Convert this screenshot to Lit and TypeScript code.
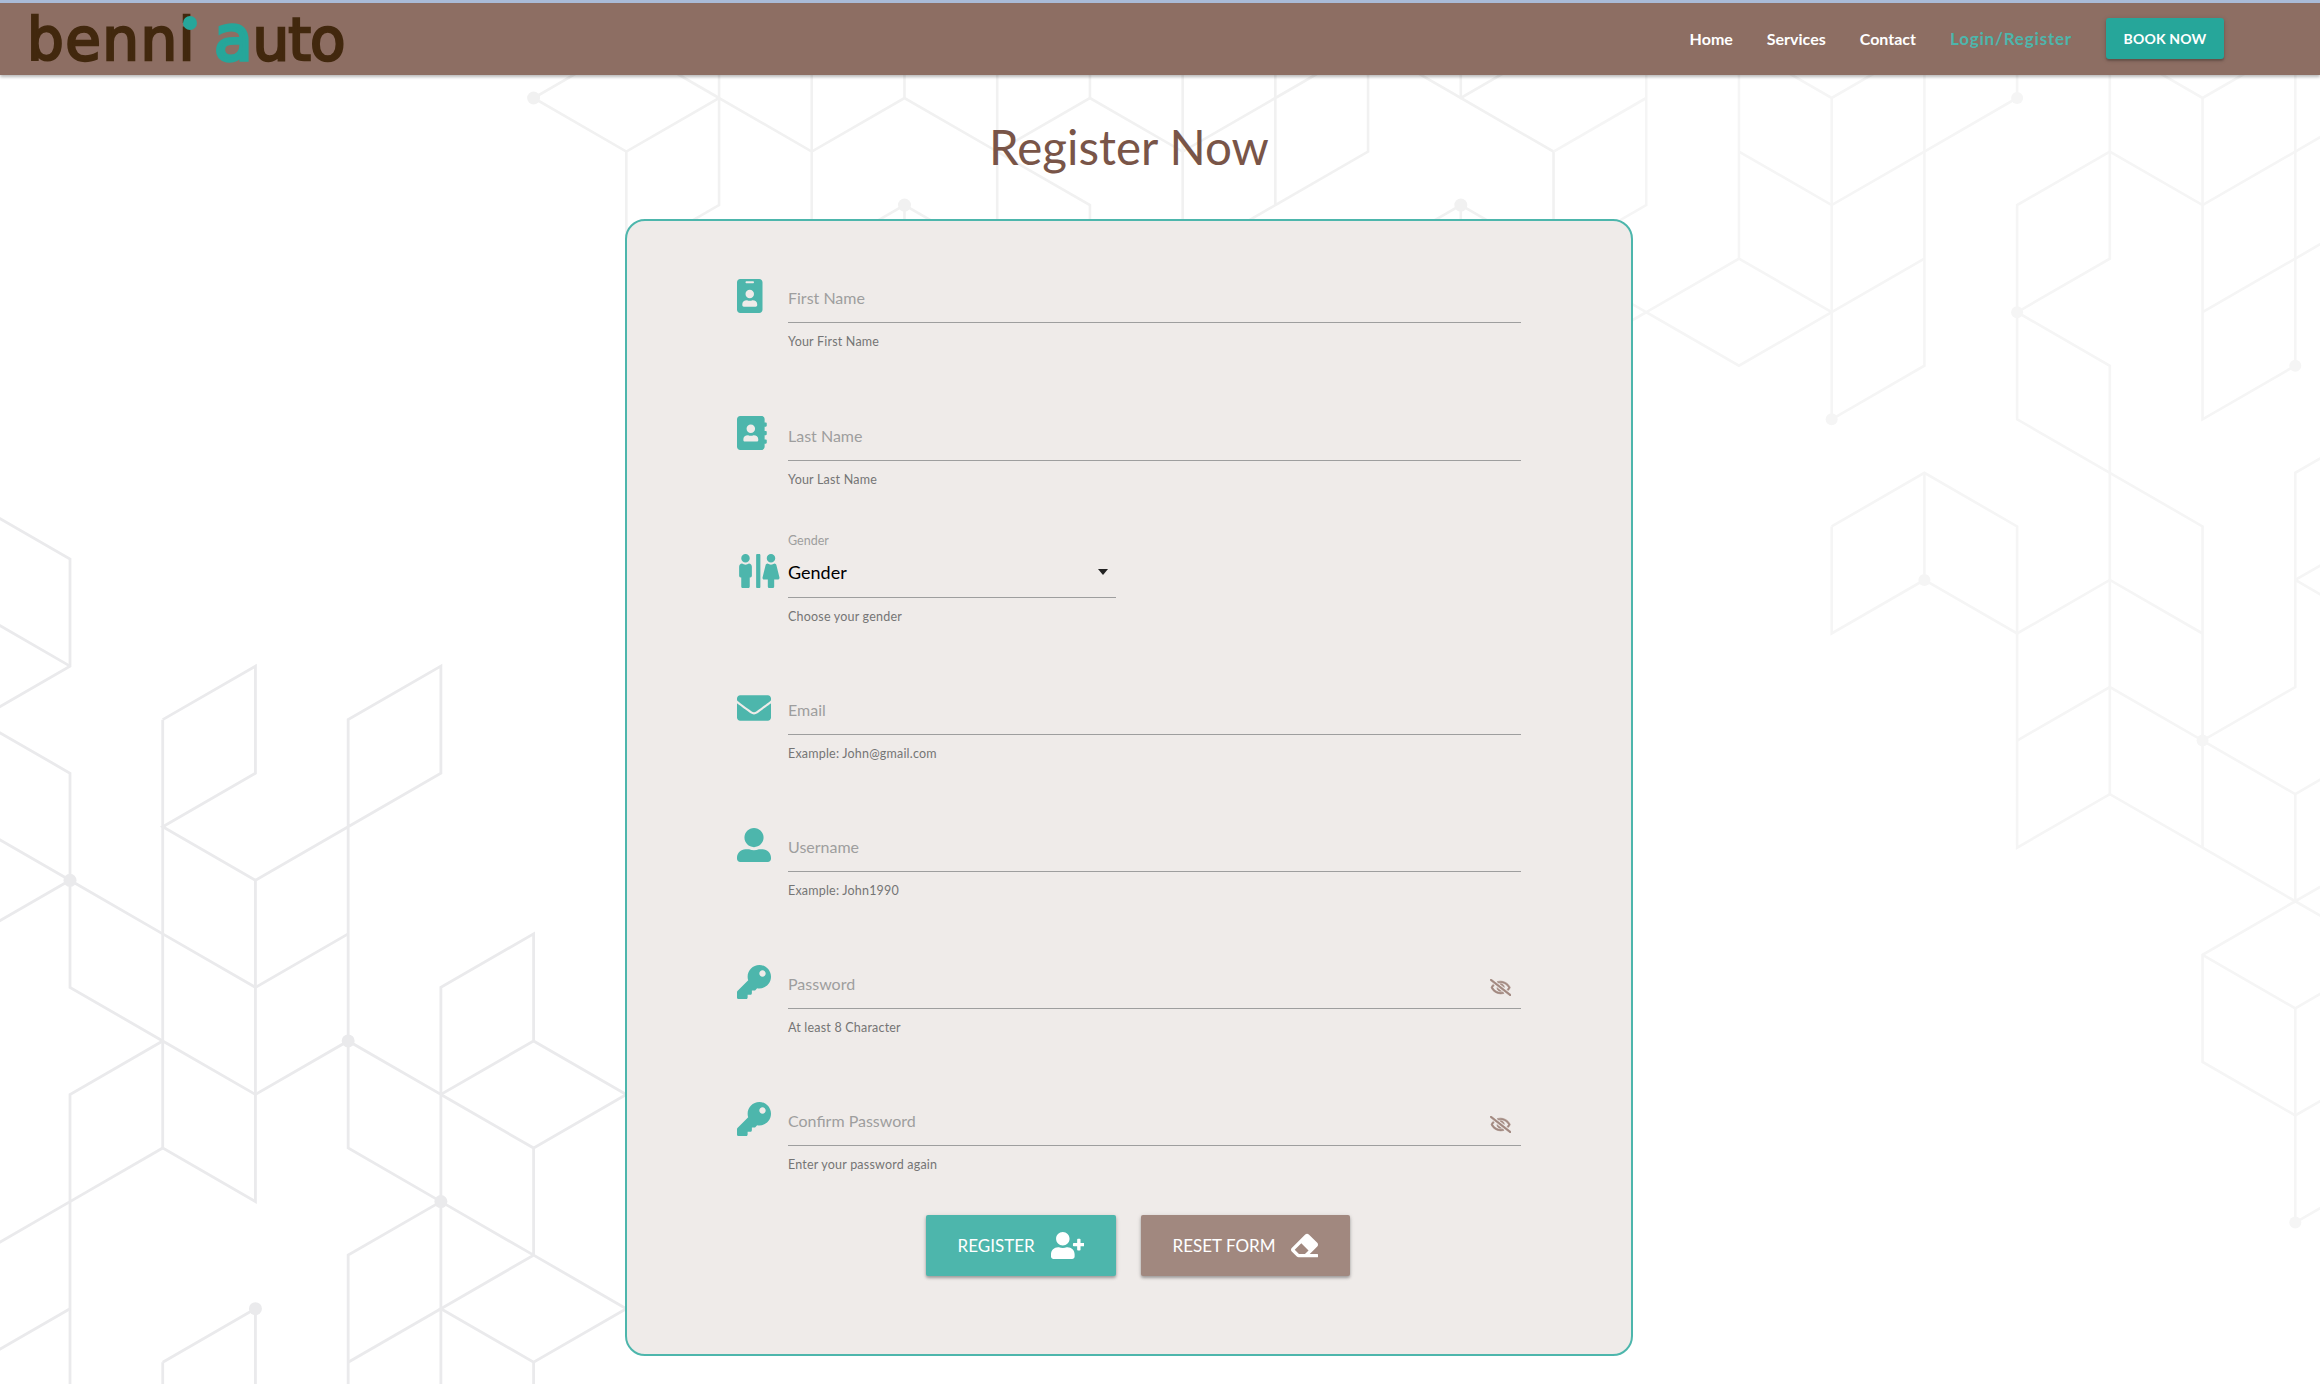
import { LitElement, html, css, svg } from "lit";
import { customElement } from "lit/decorators.js";

const P = {
  badge: ["0 0 384 512", "M336 0H48C21.5 0 0 21.5 0 48v416c0 26.5 21.5 48 48 48h288c26.5 0 48-21.5 48-48V48c0-26.5-21.5-48-48-48zM144 32h96c8.8 0 16 7.2 16 16s-7.2 16-16 16h-96c-8.8 0-16-7.2-16-16s7.2-16 16-16zm48 128c35.3 0 64 28.7 64 64s-28.7 64-64 64-64-28.7-64-64 28.7-64 64-64zm112 236.8c0 10.6-10 19.2-22.4 19.2H102.4C90 416 80 407.4 80 396.8v-19.2c0-31.8 30.1-57.6 67.2-57.6h5c12.3 5.1 25.7 8 39.8 8s27.6-2.9 39.8-8h5c37.1 0 67.2 25.8 67.2 57.6v19.2z"],
  book: ["0 0 448 512", "M436 160c6.6 0 12-5.4 12-12v-40c0-6.6-5.4-12-12-12h-20V48c0-26.5-21.5-48-48-48H48C21.5 0 0 21.5 0 48v416c0 26.5 21.5 48 48 48h320c26.5 0 48-21.5 48-48v-48h20c6.6 0 12-5.4 12-12v-40c0-6.6-5.4-12-12-12h-20v-64h20c6.6 0 12-5.4 12-12v-40c0-6.6-5.4-12-12-12h-20v-64h20zm-228-32c35.3 0 64 28.7 64 64s-28.7 64-64 64-64-28.7-64-64 28.7-64 64-64zm112 236.8c0 10.6-10 19.2-22.4 19.2H118.4C106 384 96 375.4 96 364.8v-19.2c0-31.8 30.1-57.6 67.2-57.6h5c12.3 5.1 25.7 8 39.8 8s27.6-2.9 39.8-8h5c37.1 0 67.2 25.8 67.2 57.6v19.2z"],
  restroom: ["0 0 640 512", "M128 128c35.3 0 64-28.7 64-64S163.3 0 128 0 64 28.7 64 64s28.7 64 64 64zm384 0c35.3 0 64-28.7 64-64S547.3 0 512 0s-64 28.7-64 64 28.7 64 64 64zm127.3 226.5l-45.6-185.8c-3.3-13.5-15.5-23-29.8-24.2-15 9.7-32.8 15.5-52 15.5-19.2 0-37-5.8-52-15.5-14.3 1.2-26.5 10.7-29.8 24.2l-45.6 185.8C381 369.6 393 384 409.2 384H464v104c0 13.3 10.7 24 24 24h48c13.3 0 24-10.7 24-24V384h54.8c16.2 0 28.2-14.4 24.5-29.5zM336 0h-32c-8.8 0-16 7.2-16 16v480c0 8.8 7.2 16 16 16h32c8.8 0 16-7.2 16-16V16c0-8.8-7.2-16-16-16zM180.1 144.4c-15 9.8-32.9 15.6-52.1 15.6-19.2 0-37.1-5.8-52.1-15.6C51.3 146.5 32 166.9 32 192v136c0 13.3 10.7 24 24 24h8v136c0 13.3 10.7 24 24 24h80c13.3 0 24-10.7 24-24V352h8c13.3 0 24-10.7 24-24V192c0-25.1-19.3-45.5-43.9-47.6z"],
  envelope: ["0 0 512 512", "M502.3 190.8c3.9-3.1 9.7-.2 9.7 4.7V400c0 26.5-21.5 48-48 48H48c-26.5 0-48-21.5-48-48V195.6c0-5 5.7-7.8 9.7-4.7 22.4 17.4 52.1 39.5 154.1 113.6 21.1 15.4 56.7 47.8 92.2 47.6 35.7.3 72-32.8 92.3-47.6 102-74.1 131.6-96.3 154-113.7zM256 320c23.2.4 56.6-29.2 73.4-41.4 132.7-96.3 142.8-104.7 173.4-128.7 5.8-4.5 9.2-11.5 9.2-18.9v-19c0-26.5-21.5-48-48-48H48C21.5 64 0 85.5 0 112v19c0 7.4 3.4 14.3 9.2 18.9 30.6 23.9 40.7 32.4 173.4 128.7 16.8 12.2 50.2 41.8 73.4 41.4z"],
  user: ["0 0 512 512", "M256 288c79.5 0 144-64.5 144-144S335.5 0 256 0 112 64.5 112 144s64.5 144 144 144zm128 32h-55.1c-22.2 10.2-46.9 16-72.9 16s-50.6-5.8-72.9-16H128C57.3 320 0 377.3 0 448v16c0 26.5 21.5 48 48 48h416c26.5 0 48-21.5 48-48v-16c0-70.7-57.3-128-128-128z"],
  key: ["0 0 512 512", "M512 176.001C512 273.203 433.202 352 336 352c-11.22 0-22.19-1.062-32.827-3.069l-24.012 27.014A23.999 23.999 0 0 1 261.223 384H224v40c0 13.255-10.745 24-24 24h-40v40c0 13.255-10.745 24-24 24H24c-13.255 0-24-10.745-24-24v-78.059c0-6.365 2.529-12.47 7.029-16.971l161.802-161.802C163.108 213.814 160 195.271 160 176 160 78.798 238.797.001 335.999 0 433.488-.001 512 78.511 512 176.001zM336 128c0 26.51 21.49 48 48 48s48-21.49 48-48-21.49-48-48-48-48 21.49-48 48z"],
  userPlus: ["0 0 640 512", "M624 208h-64v-64c0-8.8-7.2-16-16-16h-32c-8.8 0-16 7.2-16 16v64h-64c-8.8 0-16 7.2-16 16v32c0 8.8 7.2 16 16 16h64v64c0 8.8 7.2 16 16 16h32c8.8 0 16-7.2 16-16v-64h64c8.8 0 16-7.2 16-16v-32c0-8.8-7.2-16-16-16zm-400 48c70.7 0 128-57.3 128-128S294.7 0 224 0 96 57.3 96 128s57.3 128 128 128zm89.6 32h-16.7c-22.2 10.2-46.9 16-72.9 16s-50.6-5.8-72.9-16h-16.7C60.2 288 0 348.2 0 422.4V464c0 26.5 21.5 48 48 48h352c26.5 0 48-21.5 48-48v-41.6c0-74.2-60.2-134.4-134.4-134.4z"],
  eraser: ["0 0 512 512", "M497.941 273.941c18.745-18.745 18.745-49.137 0-67.882l-160-160c-18.745-18.745-49.136-18.746-67.883 0l-256 256c-18.745 18.745-18.745 49.137 0 67.882l96 96A48.004 48.004 0 0 0 144 480h356c6.627 0 12-5.373 12-12v-40c0-6.627-5.373-12-12-12H355.883l142.058-142.059zm-302.627-62.627l137.373 137.373L265.373 416H150.628l-80-80 124.686-124.686z"],
  eyeSlash: ["0 0 640 512", "M634 471L36 3.51A16 16 0 0 0 13.51 6l-10 12.49A16 16 0 0 0 6 41l598 467.49a16 16 0 0 0 22.49-2.49l10-12.49A16 16 0 0 0 634 471zM296.79 146.47l134.79 105.38C429.36 191.91 380.48 144 320 144a112.26 112.26 0 0 0-23.21 2.47zm46.42 219.07L208.42 260.16C210.65 320.09 259.53 368 320 368a113 113 0 0 0 23.21-2.46zM320 112c98.65 0 189.09 55 237.93 144a285.53 285.53 0 0 1-44 60.2l37.74 29.5a333.7 333.7 0 0 0 52.9-75.11 32.35 32.35 0 0 0 0-29.19C550.29 135.59 442.93 64 320 64c-36.7 0-71.71 7-104.63 18.81l46.41 36.29c18.94-4.3 38.34-7.1 58.22-7.1zm0 288c-98.65 0-189.08-55-237.93-144a285.47 285.47 0 0 1 44.05-60.19l-37.74-29.5a333.6 333.6 0 0 0-52.89 75.1 32.35 32.35 0 0 0 0 29.19C89.72 376.41 197.08 448 320 448c36.7 0 71.71-7.05 104.63-18.81l-46.41-36.28C359.28 397.2 339.89 400 320 400z"],
};

const icon = (name: keyof typeof P, cls = "") => html`<svg class="ic ${cls}" viewBox=${P[name][0]} aria-hidden="true"><path d=${P[name][1]}></path></svg>`;

const LEFT = [
  "-1,-1 0,0 0,2 -1,3", "-1,1 0,2", "-1,3 0,4 0,8 1,9 2,10 3,9 4,10 5,9 5,7 4,8 4,16",
  "-1,5 0,6 1,7 2,8 3,7", "0,6 -1,7",
  "1,3 1,11 2,12 2,6 3,5 4,4 4,2 3,3 3,11 4,12 5,13 6,14 5,15 4,14 5,13 5,11 6,10 5,9",
  "1,3 2,2 2,4 1,5 2,6", "1,9 0,10 0,16", "0,12 1,11", "0,12 -1,13", "0,14 -1,15",
  "5,11 4,10", "4,12 3,13 3,16", "4,14 3,15", "5,15 5,16", "1,15 2,14 2,16", "1,15 1,16",
];
const LEFT_NODES = ["0,6", "3,9", "4,12", "2,14"];
const TOP = [
  "6,-1 5,0 6,1 7,0 8,1 9,0 10,1 11,0 12,1 13,0 14,-1", "6,-1 7,0", "7,-1 7,2 6,3", "6,1 6,4",
  "8,-1 8,4", "9,-1 9,0", "10,-1 10,4", "10,1 11,2 11,4", "11,-1 11,0", "12,-1 12,4",
  "13,-1 13,2 12,3", "14,-1 14,1 13,2", "9,2 9,4", "9,2 8,3", "9,2 10,3",
  "15,-1 15,0 16,1 16,4", "14,-1 15,0 16,-1", "15,2 15,4", "15,2 14,3", "15,2 16,3",
];
const TOP_NODES = ["5,0", "9,2", "15,2"];
const RIGHT = [
  "16,1 17,0", "17,-1 17,2 16,3", "18,-1 18,3 17,4 18,5 19,4 20,3", "18,1 19,2 20,1 21,0 21,-1",
  "18,-1 19,0 20,-1", "19,0 19,6 20,5 20,-1", "19,4 18,3", "16,3 17,4 16,5",
  "22,-1 22,3 21,4 22,5 22,13", "22,1 21,2 21,6 22,7 23,8 23,14", "22,1 23,2 24,1 25,0",
  "22,-1 23,0 24,-1", "23,0 23,6 24,5 24,-1", "23,4 24,3 25,2",
  "19,8 20,7 21,8 21,14 22,13 23,14 24,15", "20,7 20,9 19,10 19,8", "20,9 21,10 22,9 23,10",
  "21,12 22,11 23,12 24,11 24,7 25,6", "23,12 24,13 24,15 25,14", "24,13 25,12",
  "24,9 25,8", "24,9 25,10", "24,15 25,16", "24,15 23,16 23,18 24,19 25,18",
  "23,16 24,17 24,21 25,20", "24,17 25,16",
];
const RIGHT_NODES = ["21,0", "19,6", "24,5", "21,4", "20,9", "23,12", "24,21"];

const pt = (s: string, base: number) => {
  const [c, k] = s.split(",").map(Number);
  return [70 + 92.72 * c, base + 53.55 * k];
};
const group = (lines: string[], nodes: string[], base: number, color: string, w: number, r: number) => svg`
  <g fill="none" stroke=${color} stroke-width=${w} stroke-linejoin="miter">
    ${lines.map((l) => svg`<polyline points=${l.split(" ").map((p) => pt(p, base).join(",")).join(" ")}></polyline>`)}
  </g>
  <g fill=${color}>
    ${nodes.map((n) => { const [x, y] = pt(n, base); return svg`<circle cx=${x} cy=${y} r=${r}></circle>`; })}
  </g>`;

const ROWS = [
  { ic: "badge", label: "First Name", help: "Your First Name" },
  { ic: "book", label: "Last Name", help: "Your Last Name" },
  { ic: "restroom", label: "Gender", help: "Choose your gender", select: true },
  { ic: "envelope", label: "Email", help: "Example: John@gmail.com" },
  { ic: "user", label: "Username", help: "Example: John1990" },
  { ic: "key", label: "Password", help: "At least 8 Character", eye: true },
  { ic: "key", label: "Confirm Password", help: "Enter your password again", eye: true },
] as const;

@customElement("app-root")
export class AppRoot extends LitElement {
  static styles = css`
    :host { display: block; position: relative; height: 1384px; overflow: hidden; background: #fff; font-family: "Lato", "Noto Sans", sans-serif; }
    * { box-sizing: border-box; }
    .bg { position: absolute; left: 0; top: 0; width: 2320px; height: 1384px; }
    header { position: relative; height: 75px; background: #8d6e63; border-top: 3px solid #a9bbd8; display: flex; align-items: center; justify-content: space-between; padding: 0 96px 0 27px; box-shadow: 0 2px 3px rgba(0,0,0,.28); }
    .logo { position: relative; font-family: "DejaVu Sans", sans-serif; font-size: 58px; line-height: 70px; color: #42280e; -webkit-text-stroke: 2.4px #42280e; white-space: nowrap; letter-spacing: 1.4px; word-spacing: -2px; }
    .logo .a { color: #26a69a; -webkit-text-stroke: 3.4px #26a69a; font-size: 63px; letter-spacing: 0; }
    .logo .uto { letter-spacing: -1px; }
    .logo .dot { position: absolute; left: 156px; top: 12px; width: 14px; height: 14px; border-radius: 50%; background: #26a69a; }
    nav { display: flex; align-items: center; gap: 34px; margin-top: -1px; }
    nav a { color: #fff; font-size: 16px; font-weight: 700; }
    nav a.on { color: #4db6ac; font-size: 17px; letter-spacing: .8px; }
    .book { background: #26a69a; color: #fff; width: 118px; height: 41px; display: flex; align-items: center; justify-content: center; border-radius: 3px; font-size: 14px; font-weight: 700; letter-spacing: .2px; box-shadow: 0 2px 2px rgba(0,0,0,.2), 0 1px 5px rgba(0,0,0,.15); }
    main { position: relative; padding-left: 625px; width: 1633px; }
    h1 { margin: 42px 0 42px; text-align: center; font-size: 47.5px; line-height: 60px; font-weight: 400; color: #795548; height: 60px; }
    .card { width: 1008px; background: #efebe9; border: 2px solid #4db6ac; border-radius: 20px; padding: 49px 110px 78px; }
    .row { display: flex; height: 137px; align-items: flex-start; }
    .row.first { height: 138px; }
    .row.second .iconbox { padding-top: 8px; }
    .row.last { height: 122px; }
    .iconbox { width: 51px; flex: none; padding-top: 9px; }
    .ic { display: block; height: 34px; fill: #4db6ac; }
    .body { flex: 1; min-width: 0; }
    .body.narrow { flex: none; width: 328px; }
    .field { position: relative; height: 53px; border-bottom: 1px solid #9e9e9e; }
    .field input { position: absolute; inset: 0; width: 100%; border: 0; background: transparent; outline: 0; }
    .field label { position: absolute; left: 0; top: 16px; font-size: 16px; line-height: 24px; color: #9e9e9e; }
    .eye { position: absolute; right: 10px; top: 23px; height: 17px; fill: #a1887f; stroke: #a1887f; stroke-width: 18px; }
    .small { position: absolute; left: 0; top: -12px; font-size: 12.5px; line-height: 16px; color: #9e9e9e; }
    .val { position: absolute; left: 0; top: 14px; font-size: 18px; line-height: 26px; color: #000; }
    .caret { position: absolute; right: 8px; top: 24px; width: 0; height: 0; border-left: 5.5px solid transparent; border-right: 5.5px solid transparent; border-top: 6px solid #222; }
    .help { margin-top: 10px; font-size: 12.5px; line-height: 18px; letter-spacing: .2px; color: #757575; }
    .actions { display: flex; gap: 25px; padding-left: 189px; }
    .btn { height: 61px; display: flex; align-items: center; justify-content: center; gap: 16px; color: #fff; border-radius: 2px; font-size: 17px; box-shadow: 0 2px 3px rgba(0,0,0,.28), 0 1px 5px rgba(0,0,0,.12); }
    .btn .ic { fill: #fff; height: 27px; }
    .reg { width: 190px; background: #4db6ac; }
    .res { width: 209px; background: #a1887f; }
  `;

  render() {
    return html`
      <svg class="bg" viewBox="0 0 2320 1384" aria-hidden="true">
        ${group(LEFT, LEFT_NODES, 559, "#eaeaec", 2.8, 6.5)}
        ${group(TOP, TOP_NODES, 98, "#f1f1f1", 2.6, 6.5)}
        ${group(RIGHT, RIGHT_NODES, 98, "#f5f5f5", 2.6, 6)}
      </svg>
      <header>
        <div class="logo">benni <span class="a">a</span><span class="uto">uto</span><span class="dot"></span></div>
        <nav>
          <a>Home</a><a>Services</a><a>Contact</a><a class="on">Login/Register</a>
          <div class="book">BOOK NOW</div>
        </nav>
      </header>
      <main>
        <h1>Register Now</h1>
        <div class="card">
          ${ROWS.map((r: any, i: number) => html`
            <div class="row ${i === 0 ? "first" : ""} ${i === 1 ? "second" : ""} ${i === ROWS.length - 1 ? "last" : ""}">
              <div class="iconbox">${icon(r.ic)}</div>
              <div class="body ${r.select ? "narrow" : ""}">
                <div class="field">
                  ${r.select
                    ? html`<span class="small">${r.label}</span><span class="val">${r.label}</span><span class="caret"></span>`
                    : html`<input type=${r.eye ? "password" : "text"} aria-label=${r.label} /><label>${r.label}</label>`}
                  ${r.eye ? icon("eyeSlash", "eye") : ""}
                </div>
                <div class="help">${r.help}</div>
              </div>
            </div>`)}
          <div class="actions">
            <div class="btn reg">REGISTER ${icon("userPlus")}</div>
            <div class="btn res">RESET FORM ${icon("eraser")}</div>
          </div>
        </div>
      </main>
    `;
  }
}
